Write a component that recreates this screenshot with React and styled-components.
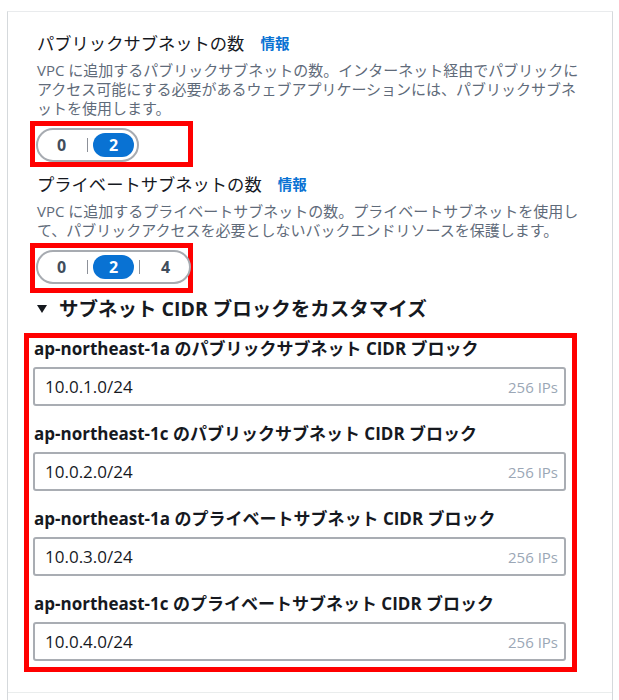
import React from "react";
import styled, { createGlobalStyle } from "styled-components";

const GlobalStyle = createGlobalStyle`
  body {
    margin: 0;
    background: #ffffff;
    font-family: "Open Sans", "Noto Sans CJK JP", sans-serif;
    color: #16191f;
  }
`;

const subnetCounts = [
  {
    title: "パブリックサブネットの数",
    desc: "VPC に追加するパブリックサブネットの数。インターネット経由でパブリックにアクセス可能にする必要があるウェブアプリケーションには、パブリックサブネットを使用します。",
    options: ["0", "2"],
    selected: "2",
    boxHeight: 46,
  },
  {
    title: "プライベートサブネットの数",
    desc: "VPC に追加するプライベートサブネットの数。プライベートサブネットを使用して、パブリックアクセスを必要としないバックエンドリソースを保護します。",
    options: ["0", "2", "4"],
    selected: "2",
    boxHeight: 50,
  },
];

const cidrFields = [
  { label: "ap-northeast-1a のパブリックサブネット CIDR ブロック", value: "10.0.1.0/24" },
  { label: "ap-northeast-1c のパブリックサブネット CIDR ブロック", value: "10.0.2.0/24" },
  { label: "ap-northeast-1a のプライベートサブネット CIDR ブロック", value: "10.0.3.0/24" },
  { label: "ap-northeast-1c のプライベートサブネット CIDR ブロック", value: "10.0.4.0/24" },
];

function SegmentedControl({ options, selected }) {
  return (
    <Segmented>
      {options.map((opt, i) => (
        <React.Fragment key={opt}>
          {i > 0 && <SegDivider />}
          <SegButton $active={opt === selected}>{opt}</SegButton>
        </React.Fragment>
      ))}
    </Segmented>
  );
}

export default function App() {
  return (
    <>
      <GlobalStyle />
      <Card lang="ja">
        <Body>
          <Section>
            {subnetCounts.map((s) => (
              <Group key={s.title}>
                <Title>
                  {s.title}
                  <InfoLink>情報</InfoLink>
                </Title>
                <Desc>{s.desc}</Desc>
                <RedBox $w={163} $h={s.boxHeight}>
                  <SegmentedControl options={s.options} selected={s.selected} />
                </RedBox>
              </Group>
            ))}
            <Heading>
              <svg width="10" height="8" viewBox="0 0 10 8">
                <polygon points="0,0 10,0 5,8" fill="#16191f" />
              </svg>
              サブネット CIDR ブロックをカスタマイズ
            </Heading>
          </Section>
          <CidrBox>
            {cidrFields.map((f) => (
              <Field key={f.label}>
                <Label>{f.label}</Label>
                <InputBox>
                  <Input defaultValue={f.value} readOnly />
                  <Suffix>256 IPs</Suffix>
                </InputBox>
              </Field>
            ))}
          </CidrBox>
        </Body>
        <Footer />
      </Card>
    </>
  );
}

const Card = styled.div`
  box-sizing: border-box;
  width: 606px;
  margin: 11px 0 0 7px;
  border-top: 1px solid #e9ebed;
  border-left: 1px solid #d5d9dc;
  border-right: 1px solid #d5d9dc;
`;

const Body = styled.div`
  padding: 21px 0 20px 16px;
`;

const Footer = styled.div`
  height: 20px;
  border-top: 1px solid #eaeded;
`;

const Section = styled.div`
  padding-left: 6px;
`;

const Group = styled.div`
  & + & {
    margin-top: 7px;
  }
`;

const Title = styled.div`
  display: flex;
  align-items: center;
  gap: 16px;
  height: 22px;
  padding-left: 7px;
  font-size: 17.3px;
  line-height: 22px;
  color: #16191f;
`;

const InfoLink = styled.a`
  font-size: 14.5px;
  font-weight: 700;
  color: #0972d3;
  text-decoration: none;
  cursor: pointer;
`;

const Desc = styled.p`
  width: 548px;
  margin: 6px 0 0;
  padding-left: 7px;
  font-size: 15px;
  line-height: 19px;
  color: #5f6b7a;
  line-break: loose;
`;

const RedBox = styled.div`
  box-sizing: border-box;
  width: ${(p) => p.$w}px;
  height: ${(p) => p.$h}px;
  margin-top: 3px;
  padding: 2px 0 0 1px;
  border: 5px solid #ff0000;
`;

const Segmented = styled.div`
  display: inline-flex;
  align-items: center;
  box-sizing: border-box;
  height: 34px;
  padding: 0 3px;
  border: 2px solid #a7abb1;
  border-radius: 17px;
  background: #ffffff;
`;

const SegButton = styled.button`
  width: 41px;
  height: 24px;
  padding: 0;
  border: none;
  border-radius: 12px;
  font-family: inherit;
  font-size: 16px;
  font-weight: 700;
  background: ${(p) => (p.$active ? "#0972d3" : "transparent")};
  color: ${(p) => (p.$active ? "#ffffff" : "#414d5c")};
  cursor: pointer;
`;

const SegDivider = styled.span`
  width: 1px;
  height: 14px;
  margin: 0 5px;
  background: #8d9199;
`;

const Heading = styled.h3`
  display: flex;
  align-items: center;
  gap: 12px;
  height: 26px;
  margin: 3px 0 11px;
  padding-left: 7px;
  font-size: 19.5px;
  line-height: 26px;
  font-weight: 700;
  color: #16191f;
`;

const CidrBox = styled.div`
  box-sizing: border-box;
  width: 553px;
  display: flex;
  flex-direction: column;
  gap: 17px;
  padding: 0 6px 6px 4px;
  border: 5px solid #ff0000;
`;

const Field = styled.div`
  display: flex;
  flex-direction: column;
  gap: 7px;
`;

const Label = styled.label`
  display: block;
  height: 22px;
  padding-left: 1px;
  font-size: 17px;
  line-height: 22px;
  font-weight: 700;
  color: #16191f;
`;

const InputBox = styled.div`
  display: flex;
  align-items: center;
  box-sizing: border-box;
  height: 39px;
  padding: 0 6px 0 10px;
  border: 2px solid #a9adb3;
  border-radius: 3px;
  background: #ffffff;
`;

const Input = styled.input`
  flex: 1;
  min-width: 0;
  padding: 0;
  border: none;
  outline: none;
  background: transparent;
  font-family: inherit;
  font-size: 17px;
  color: #16191f;
`;

const Suffix = styled.span`
  font-size: 15px;
  color: #9ba7b6;
`;
